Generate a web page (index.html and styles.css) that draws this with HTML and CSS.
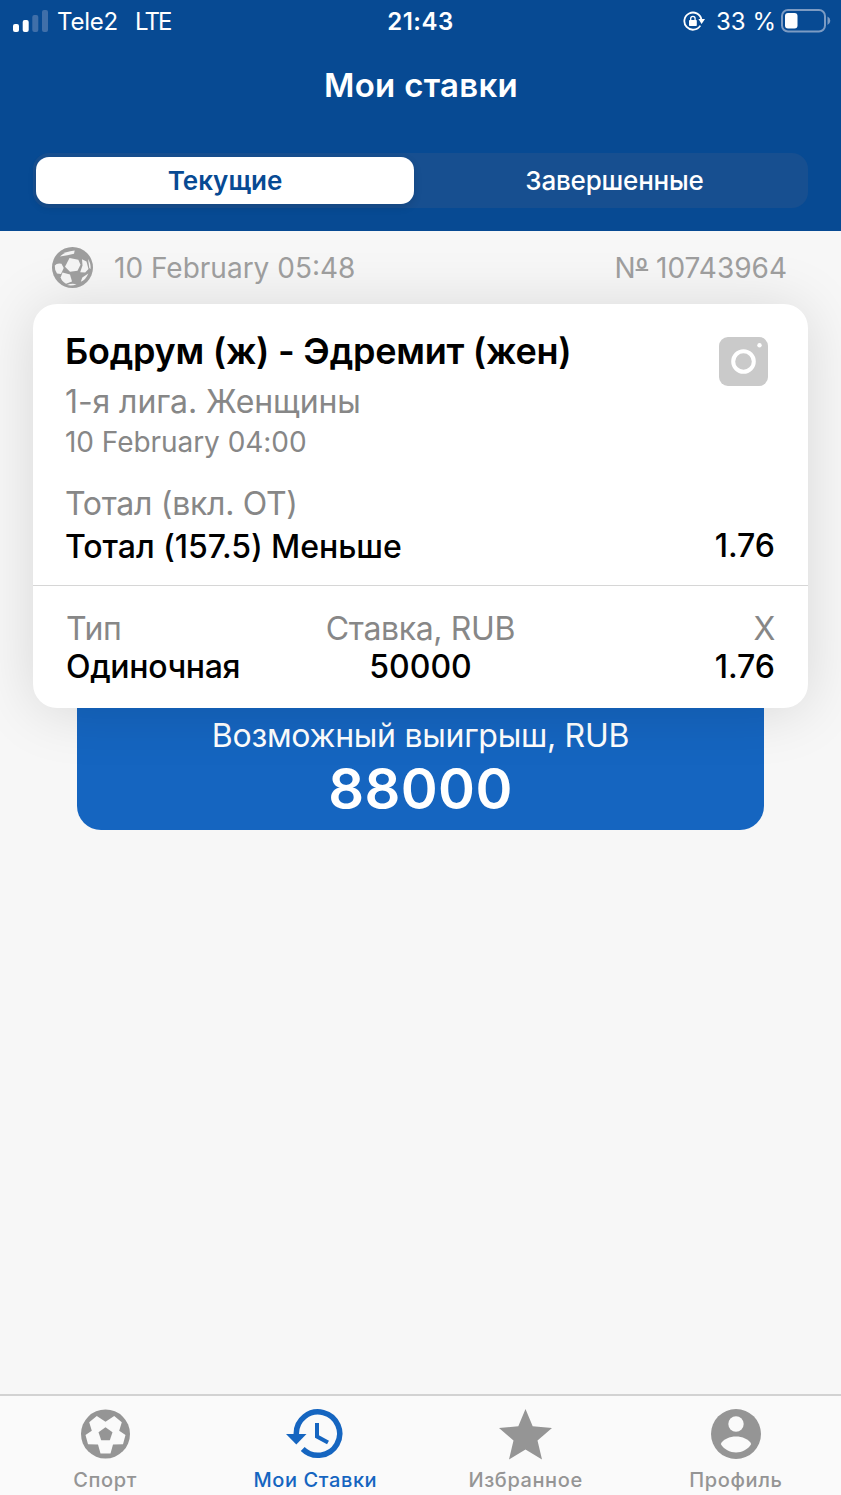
FILE: index.html
```html
<!DOCTYPE html>
<html lang="ru">
<head>
    <meta charset="UTF-8">
    <meta name="viewport" content="width=device-width, initial-scale=1.0">
    <title>Мои ставки</title>
    <link rel="stylesheet" href="styles.css">
</head>
<body>
    <header>
        <div class="status-bar">
            <div class="status-left">
                <svg class="signal" viewBox="0 0 35 22">
                    <rect x="0" y="14" width="6" height="8" rx="2" fill="#fff"/>
                    <rect x="9.7" y="10" width="6" height="12" rx="2" fill="#fff"/>
                    <rect x="19.3" y="5" width="6" height="17" rx="2" fill="#406fa9"/>
                    <rect x="29" y="0" width="6" height="22" rx="2" fill="#406fa9"/>
                </svg>
                <span class="carrier">Tele2</span>
                <span class="network">LTE</span>
            </div>
            <div class="clock">21:43</div>
            <div class="status-right">
                <svg class="lock" viewBox="0 0 22 20">
                    <path d="M17.3 14.6A8.6 8.6 0 1 1 18.4 8.5" fill="none" stroke="#fff" stroke-width="1.8"/>
                    <path d="M15.4 8h6.6l-3.4 5z" fill="#fff"/>
                    <rect x="6" y="9" width="7.8" height="6" rx="0.8" fill="#fff"/>
                    <path d="M7.7 9.5V7.5a2.2 2.2 0 0 1 4.400 0V9.500" fill="none" stroke="#fff" stroke-width="1.300"/>
                </svg>
                <span class="percent">33 %</span>
                <svg class="battery" viewBox="0 0 50 24">
                    <rect x="1" y="1" width="43" height="21.500" rx="6" fill="none" stroke="#7c9bc3" stroke-width="2"/>
                    <rect x="4" y="4" width="12.500" height="15.500" rx="3" fill="#fff"/>
                    <path d="M46.500 7.500q2.800 1.500 2.800 4.300t-2.800 4.300z" fill="#7c9bc3"/>
                </svg>
            </div>
        </div>
        <h1>Мои ставки</h1>
        <nav class="segments">
            <a class="segment active">Текущие</a>
            <a class="segment">Завершенные</a>
        </nav>
    </header>

    <main>
        <div class="bet-head">
            <svg class="ball" viewBox="0 0 41 41">
                <circle cx="20.5" cy="20.5" r="20.5" fill="#9d9d9d"/>
                <g fill="#f3f3f3">
                    <path d="M17.5 11l8.800 1.700 2.200 5-3 6-7.500 1-5-5z"/>
                    <path d="M8 9.500Q12.500 4.500 22.700 3.500L22 6.800 15.500 8.200z"/>
                    <path d="M2.800 18.500Q5 15.800 9.500 16.800L11.700 21 9 27 5 26.500Q2.500 23 2.800 18.500z"/>
                    <path d="M10.500 25.500l7.500 2 2 7-6 2.200q-4.800-3-5.300-6.500z"/>
                    <path d="M30 12.200l4.500 2.300 2 7.500-3.300 3.500-5-.3 2.300-6.700z"/>
                    <path d="M36 12q3 4.500 2.600 10l-1.300-1z"/>
                    <path d="M36.300 26.500q-2.300 6-7.500 8.300l1.500-4.300z"/>
                    <path d="M15 38q4.500-2 9.500-.8-4.500 2-9.500.8z"/>
                </g>
            </svg>
            <span class="bet-date">10 February 05:48</span>
            <span class="bet-number">N<span class="ordinal">º</span> 10743964</span>
        </div>

        <section class="card">
            <div class="event">
                <div class="event-top">
                    <h2>Бодрум (ж) - Эдремит (жен)</h2>
                    <svg class="camera" viewBox="0 0 49 49">
                        <rect width="49" height="49" rx="9" fill="#cacaca"/>
                        <circle cx="24.500" cy="24.500" r="10.300" fill="none" stroke="#fff" stroke-width="4"/>
                        <circle cx="40.500" cy="8.300" r="2.200" fill="#fff"/>
                    </svg>
                </div>
                <p class="league">1-я лига. Женщины</p>
                <p class="event-date">10 February 04:00</p>
                <p class="market">Тотал (вкл. ОТ)</p>
                <div class="outcome">
                    <span class="pick">Тотал (157.5) Меньше</span>
                    <span class="odds">1.76</span>
                </div>
            </div>
            <div class="summary">
                <div class="cell">
                    <span class="label">Тип</span>
                    <span class="value type">Одиночная</span>
                </div>
                <div class="cell center">
                    <span class="label">Ставка, RUB</span>
                    <span class="value">50000</span>
                </div>
                <div class="cell right">
                    <span class="label">X</span>
                    <span class="value">1.76</span>
                </div>
            </div>
        </section>

        <section class="payout">
            <span class="payout-label">Возможный выигрыш, RUB</span>
            <span class="payout-value">88000</span>
        </section>
    </main>

    <footer class="tabs">
        <a class="tab">
            <svg viewBox="0 0 54 52">
                <circle cx="27.5" cy="26" r="24.500" fill="#959595"/>
                <path fill="#fafafa" d="M18.800 8l8.700 5.700L36.200 8l7.600 6.300-2.600 8.400 6.300 4.300-2.500 9.200-10 .2-2.500 9h-10l-2.500-9-10-.2L7.500 27l6.300-4.300-2.600-8.400z"/>
                <path fill="#959595" d="M27.500 19.300l7 5-2.700 7.900h-8.600l-2.700-7.900z"/>
            </svg>
            <span>Спорт</span>
        </a>
        <a class="tab active">
            <svg class="history" viewBox="0 0 57 52">
                <path d="M10.300 27.500V26A21.700 21.700 0 1 1 16.700 41" fill="none" stroke="#1565c0" stroke-width="5.500"/>
                <path d="M0 26h20.500L10.300 36.500z" fill="#1565c0"/>
                <path d="M31 15v13.500l11 6" fill="none" stroke="#1565c0" stroke-width="4"/>
            </svg>
            <span>Мои Ставки</span>
        </a>
        <a class="tab">
            <svg viewBox="0 0 54 52">
                <path fill="#959595" d="M26.500 1l7.200 17.300L53 20 38.500 32.500 43 51.500 26.500 41.500 10 51.500 14.500 32.500 0 20l19.300-1.700z"/>
            </svg>
            <span>Избранное</span>
        </a>
        <a class="tab">
            <svg viewBox="0 0 54 52">
                <circle cx="27" cy="26" r="25" fill="#959595"/>
                <circle cx="27" cy="16" r="7.700" fill="#fafafa"/>
                <path fill="#fafafa" d="M11.800 36C14 31 21 28.500 27 28.500S40 31 42.200 36C39 41.500 33 44.500 27 44.500S15 41.500 11.800 36z"/>
            </svg>
            <span>Профиль</span>
        </a>
    </footer>
</body>
</html>
```

FILE: styles.css
```css
* {
    box-sizing: border-box;
}

body {
    font-family: Inter, "Liberation Sans", sans-serif;
    margin: 0;
    background-color: #f7f7f7;
    min-height: 1495px;
    display: flex;
    flex-direction: column;
    white-space: nowrap;
}

header {
    background-color: #074a93;
    color: white;
    height: 231px;
    padding: 0 33px;
    flex: none;
}

.status-bar {
    display: grid;
    grid-template-columns: 1fr auto 1fr;
    align-items: center;
    height: 42px;
    margin: 0 -33px;
    padding: 0 11px 0 13px;
    font-size: 24px;
}

.status-left,
.status-right {
    display: flex;
    align-items: center;
}

.status-right {
    justify-content: flex-end;
}

.signal {
    width: 35px;
    height: 22px;
    margin-right: 9px;
}

.carrier {
    letter-spacing: -0.2px;
}

.network {
    margin-left: 17px;
    letter-spacing: -1.9px;
}

.clock {
    font-weight: 600;
    letter-spacing: 0.5px;
    margin-right: 2px;
}

.lock {
    width: 22px;
    height: 20px;
    margin-right: 11px;
}

.battery {
    width: 50px;
    height: 24px;
    margin-left: 5px;
    margin-right: -1px;
}

h1 {
    margin: 23px 0 0;
    font-size: 33px;
    line-height: 40px;
    font-weight: 600;
    text-align: center;
    text-indent: 1px;
    letter-spacing: 0.3px;
}

.segments {
    display: flex;
    height: 55px;
    margin-top: 48px;
    padding: 4px 0 4px 3px;
    border-radius: 16px;
    background-color: #174f90;
}

.segment {
    flex: 1;
    display: flex;
    align-items: center;
    justify-content: center;
    border-radius: 13px;
    font-size: 26px;
    font-weight: 500;
    letter-spacing: -0.2px;
}

.segment.active {
    flex: 0 0 378px;
    margin-right: 7px;
    background-color: white;
    color: #074a93;
    font-weight: 600;
    letter-spacing: 0;
    box-shadow: 0 3px 8px rgba(0, 0, 0, 0.12);
}

main {
    flex: 1;
    padding: 0 33px;
}

.bet-head {
    display: flex;
    align-items: center;
    height: 73px;
    padding: 0 21px 0 19px;
    color: #9d9d9d;
    font-size: 28px;
}

.ball {
    width: 41px;
    height: 41px;
    margin-right: 21px;
}

.bet-number {
    margin-left: auto;
}

.ordinal {
    text-decoration: underline;
    text-decoration-thickness: 2px;
    text-decoration-skip-ink: none;
    text-underline-offset: -9px;
}

.ball,
.bet-date,
.bet-number {
    position: relative;
    z-index: 2;
}

.card {
    position: relative;
    z-index: 1;
    height: 404px;
    border-radius: 24px;
    background-color: white;
    box-shadow: 0 3px 60px rgba(0, 0, 0, 0.13);
}

.event {
    height: 282px;
    padding: 25px 33px 0;
    border-bottom: 1px solid #d6d6d6;
}

.event-top {
    display: flex;
    justify-content: space-between;
    height: 51px;
}

h2 {
    margin: 0 0 0 -1px;
    font-size: 36px;
    line-height: 44px;
    font-weight: 600;
    letter-spacing: -0.26px;
}

.camera {
    width: 49px;
    height: 49px;
    margin: 8px 7px 0 0;
}

p {
    margin: 0 0 0 -1px;
    color: #878787;
}

.league,
.market {
    font-size: 32px;
    line-height: 44px;
    letter-spacing: -0.1px;
}

.event-date {
    font-size: 28px;
    line-height: 36px;
    letter-spacing: -0.05px;
}

.market {
    margin-top: 22px;
    letter-spacing: -0.3px;
}

.outcome {
    display: flex;
    justify-content: space-between;
    font-size: 32px;
    line-height: 42px;
    font-weight: 500;
}

.outcome .odds {
    line-height: 40px;
}

.pick {
    margin-left: -1px;
    letter-spacing: -0.06px;
}

.summary {
    display: grid;
    grid-template-columns: 1fr auto 1fr;
    padding: 24px 33px 0;
    font-size: 32px;
    line-height: 38px;
}

.cell {
    display: flex;
    flex-direction: column;
}

.center {
    align-items: center;
}

.right {
    align-items: flex-end;
}

.label {
    color: #878787;
    letter-spacing: -0.35px;
}

.value {
    font-weight: 500;
}

.type {
    letter-spacing: -0.35px;
}

.payout {
    display: flex;
    flex-direction: column;
    align-items: center;
    height: 122px;
    margin: 0 44px;
    padding-top: 8px;
    border-radius: 0 0 24px 24px;
    background-color: #1565c0;
    color: white;
}

.payout-label {
    font-size: 32px;
    line-height: 40px;
    letter-spacing: -0.28px;
}

.payout-value {
    font-size: 56px;
    line-height: 66px;
    font-weight: 600;
    letter-spacing: 0.4px;
}

.tabs {
    display: flex;
    height: 101px;
    flex: none;
    padding-top: 12px;
    border-top: 2px solid #d2d2d2;
    background-color: #fafafa;
}

.tab {
    flex: 1;
    display: flex;
    flex-direction: column;
    align-items: center;
    color: #959595;
    font-size: 20px;
    line-height: 24px;
    font-weight: 500;
    letter-spacing: 0.6px;
}

.tab svg {
    width: 54px;
    height: 52px;
    margin-bottom: 8px;
}

.tab .history {
    width: 57px;
    margin-right: 2px;
}

.tab.active {
    color: #1565c0;
}
```
